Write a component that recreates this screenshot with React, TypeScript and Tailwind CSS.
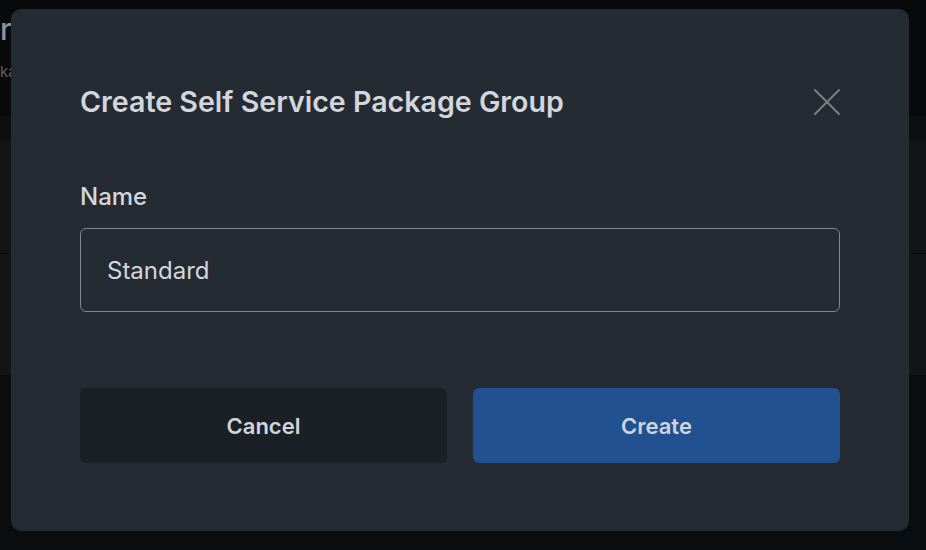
const font = { fontFamily: "Inter, 'Noto Sans', sans-serif" };

const BackgroundPage: React.FC = () => {
  return (
    <div className="flex h-[550px] w-[926px] flex-col bg-[#0a0d10]">
      <div className="h-[116px] bg-[#08090b] pt-[11px]">
        <div className="text-[30px] font-medium leading-[36px] text-[#8e9399]">ro</div>
        <div className="mt-[15px] text-[15px] leading-[20px] text-[#5c6166]">ka</div>
      </div>
      <div className="h-[24px] bg-[#0c0f12]" />
      <div className="h-[114px] border-b border-[#0a0c0e] bg-[#121518]" />
      <div className="h-[121px] bg-[#121518]" />
    </div>
  );
};

const CloseIcon: React.FC = () => (
  <svg width="28" height="28" viewBox="0 0 28 28" fill="none" stroke="currentColor" strokeWidth="2" strokeLinecap="round">
    <path d="M2 2 L26 26" />
    <path d="M26 2 L2 26" />
  </svg>
);

const App: React.FC = () => {
  return (
    <div className="relative h-[550px] w-[926px] overflow-hidden" style={font}>
      <BackgroundPage />

      <div className="absolute left-[11px] top-[9px] flex h-[522px] w-[898px] flex-col rounded-[10px] bg-[#252b33] px-[69px] pt-[75px]">
        <div className="flex items-center justify-between">
          <h2 className="text-[28.6px] font-semibold leading-[36px] text-[#d3d7dd]">
            Create Self Service Package Group
          </h2>
          <button className="mr-[-1px] flex h-[36px] w-[28px] items-center justify-center text-[#7b7f85]">
            <CloseIcon />
          </button>
        </div>

        <label className="mt-[61px] text-[24px] font-medium leading-[32px] text-[#d3d7dd]">Name</label>
        <div className="mt-[15px] flex h-[84px] items-center rounded-[6px] border border-[#84888e] px-[26px]">
          <span className="mt-[2px] text-[24px] leading-[32px] text-[#d3d7dd]">Standard</span>
        </div>

        <div className="mt-[76px] grid grid-cols-2 gap-[26px]">
          <button className="flex h-[75px] items-center justify-center rounded-[6px] bg-[#1b1f26] pt-[2px] text-[22px] font-semibold text-[#d1d5db]">
            Cancel
          </button>
          <button className="flex h-[75px] items-center justify-center rounded-[6px] bg-[#215190] pt-[2px] text-[22px] font-semibold text-[#d1d5db]">
            Create
          </button>
        </div>
      </div>
    </div>
  );
};

export default App;
